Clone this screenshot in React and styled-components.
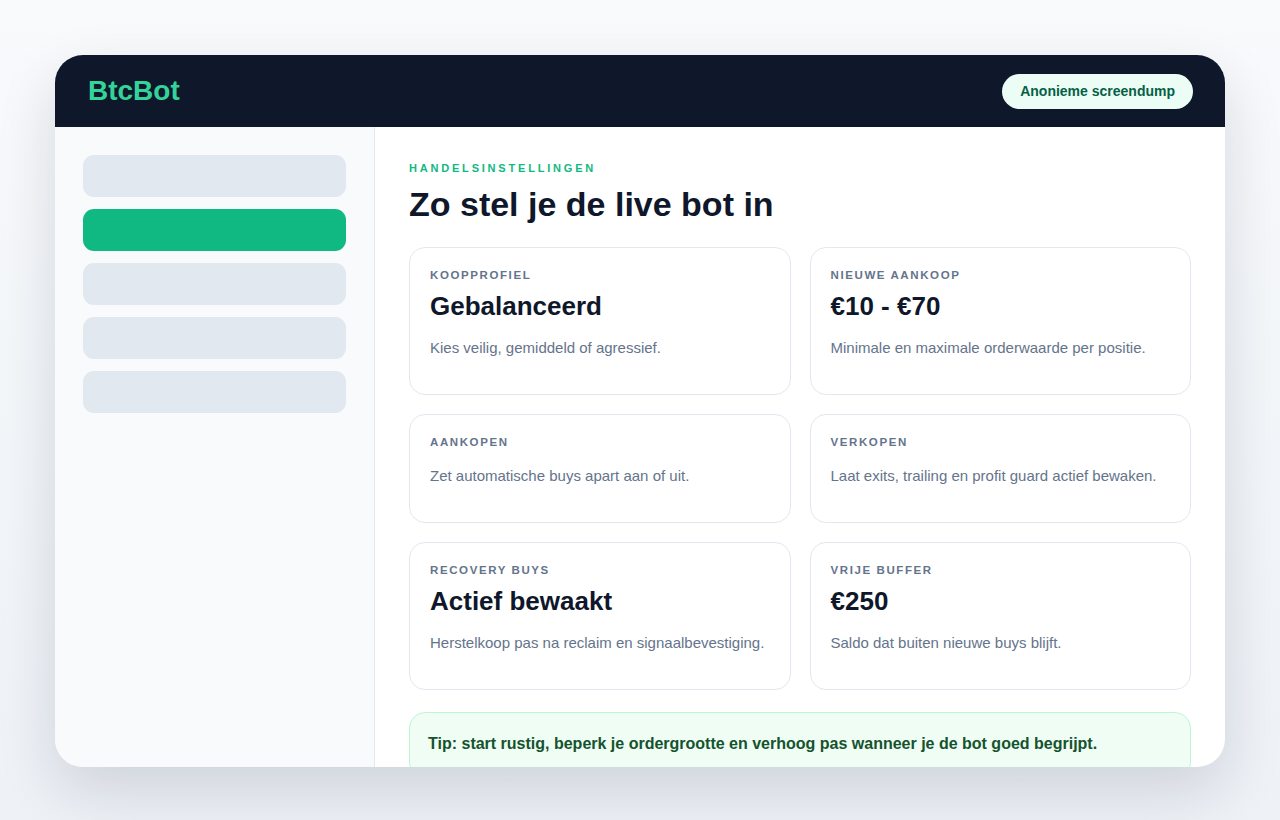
import React from "react";
import styled, { createGlobalStyle } from "styled-components";

const colors = {
  navy: "#0f172a",
  green: "#10b981",
  greenLight: "#34d399",
  slate: "#64748b",
  border: "#e2e8f0",
  sideBg: "#f8fafc",
  pill: "#e2e8f0",
};

const GlobalStyle = createGlobalStyle`
  html, body {
    margin: 0;
    padding: 0;
  }
  body {
    font-family: "Liberation Sans", Arial, sans-serif;
    background: linear-gradient(180deg, #f8fafc 0%, #eef2f7 100%);
    min-height: 820px;
  }
`;

const cards = [
  { label: "Koopprofiel", value: "Gebalanceerd", text: "Kies veilig, gemiddeld of agressief." },
  { label: "Nieuwe aankoop", value: "€10 - €70", text: "Minimale en maximale orderwaarde per positie." },
  { label: "Aankopen", text: "Zet automatische buys apart aan of uit." },
  { label: "Verkopen", text: "Laat exits, trailing en profit guard actief bewaken." },
  { label: "Recovery buys", value: "Actief bewaakt", text: "Herstelkoop pas na reclaim en signaalbevestiging." },
  { label: "Vrije buffer", value: "€250", text: "Saldo dat buiten nieuwe buys blijft." },
];

const App = () => {
  return (
    <Page>
      <GlobalStyle />
      <Frame>
        <Header>
          <Logo>BtcBot</Logo>
          <Badge>Anonieme screendump</Badge>
        </Header>
        <Body>
          <Sidebar>
            {[false, true, false, false, false].map((active, i) => (
              <NavPill key={i} $active={active} />
            ))}
          </Sidebar>
          <Main>
            <Eyebrow>Handelsinstellingen</Eyebrow>
            <Title>Zo stel je de live bot in</Title>
            <CardGrid>
              {cards.map((card) => (
                <Card key={card.label}>
                  <CardLabel>{card.label}</CardLabel>
                  {card.value && <CardValue>{card.value}</CardValue>}
                  <CardText>{card.text}</CardText>
                </Card>
              ))}
            </CardGrid>
            <Tip>
              Tip: start rustig, beperk je ordergrootte en verhoog pas wanneer je de bot goed begrijpt.
            </Tip>
          </Main>
        </Body>
      </Frame>
    </Page>
  );
};

const Page = styled.div`
  height: 820px;
  padding: 55px 55px 0;
  box-sizing: border-box;
`;

const Frame = styled.div`
  width: 1170px;
  height: 712px;
  border-radius: 28px;
  overflow: hidden;
  background: #ffffff;
  box-shadow: 0 24px 60px rgba(15, 23, 42, 0.14);
  display: flex;
  flex-direction: column;
`;

const Header = styled.header`
  height: 72px;
  flex-shrink: 0;
  background: ${colors.navy};
  display: flex;
  align-items: center;
  justify-content: space-between;
  padding: 0 32px 0 33px;
`;

const Logo = styled.div`
  color: ${colors.greenLight};
  font-size: 28px;
  font-weight: 700;
`;

const Badge = styled.div`
  background: #ecfdf5;
  color: #065f46;
  font-size: 14px;
  font-weight: 700;
  height: 35px;
  padding: 0 18px;
  border-radius: 999px;
  display: flex;
  align-items: center;
`;

const Body = styled.div`
  flex: 1;
  display: flex;
  min-height: 0;
`;

const Sidebar = styled.aside`
  flex-shrink: 0;
  background: ${colors.sideBg};
  border-right: 1px solid ${colors.border};
  padding: 28px;
  box-sizing: border-box;
  width: 320px;
  display: flex;
  flex-direction: column;
  gap: 12px;
`;

const NavPill = styled.div`
  height: 42px;
  border-radius: 11px;
  background: ${(p) => (p.$active ? colors.green : colors.pill)};
`;

const Main = styled.main`
  flex: 1;
  padding: 34px 34px 0 34px;
  overflow: hidden;
`;

const Eyebrow = styled.div`
  color: ${colors.green};
  font-size: 11px;
  line-height: 14px;
  font-weight: 700;
  letter-spacing: 2.8px;
  text-transform: uppercase;
`;

const Title = styled.h1`
  margin: 9px 0 23px;
  font-size: 34px;
  line-height: 40px;
  font-weight: 700;
  color: ${colors.navy};
`;

const CardGrid = styled.div`
  display: grid;
  grid-template-columns: 1fr 1fr;
  gap: 19px;
`;

const Card = styled.div`
  border: 1px solid ${colors.border};
  border-radius: 16px;
  padding: 20px 20px 35px;
`;

const CardLabel = styled.div`
  color: ${colors.slate};
  font-size: 11.5px;
  line-height: 14px;
  font-weight: 700;
  letter-spacing: 1.6px;
  text-transform: uppercase;
`;

const CardValue = styled.div`
  margin-top: 9px;
  color: ${colors.navy};
  font-size: 26px;
  line-height: 30px;
  font-weight: 700;
`;

const CardText = styled.div`
  margin-top: 16px;
  color: ${colors.slate};
  font-size: 15px;
  line-height: 22px;
`;

const Tip = styled.div`
  margin-top: 22px;
  background: #f0fdf4;
  border: 1px solid #bbf7d0;
  border-radius: 16px;
  padding: 21px 18px 24px;
  color: #14532d;
  font-size: 16px;
  line-height: 20px;
  font-weight: 700;
`;

export default App;
